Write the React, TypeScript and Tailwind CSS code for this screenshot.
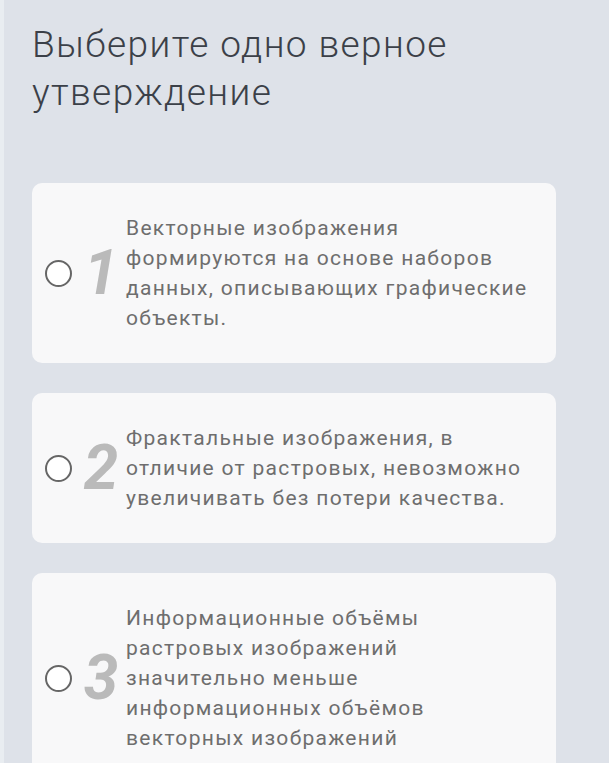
const options = [
  {
    n: "1",
    text: "Векторные изображения формируются на основе наборов данных, описывающих графические объекты.",
  },
  {
    n: "2",
    text: "Фрактальные изображения, в отличие от растровых, невозможно увеличивать без потери качества.",
  },
  {
    n: "3",
    text: "Информационные объёмы растровых изображений значительно меньше информационных объёмов векторных изображений",
  },
];

export default function App() {
  return (
    <div className="flex h-[763px] overflow-hidden bg-[#dee2e9] font-['Roboto','Noto_Sans',sans-serif]">
      {/* left strip */}
      <div className="w-[4px] shrink-0 bg-[#e9edf1]" />

      <div className="flex-1 pl-[28px] pr-[53px]">
        <h1 className="pt-[21px] text-[37px] leading-[48px] font-light tracking-[1.4px] text-[#3b4048]">
          Выберите одно верное утверждение
        </h1>

        <div className="mt-[66px] flex flex-col gap-[30px]">
          {options.map((o) => (
            <div
              key={o.n}
              className="flex items-center rounded-[10px] bg-[#f8f8f9] py-[30px] pl-[13px] pr-[22px]"
            >
              <span className="h-[27px] w-[27px] shrink-0 rounded-full border-2 border-[#666] bg-white" />
              <span className="w-[54px] shrink-0 pl-[4px] text-center text-[62px] leading-none font-bold italic text-[#bababa]">
                {o.n}
              </span>
              <p className="w-[405px] text-[21px] leading-[30px] text-[#6e6e6e] tracking-[1.3px]">
                {o.text}
              </p>
            </div>
          ))}
        </div>
      </div>
    </div>
  );
}
